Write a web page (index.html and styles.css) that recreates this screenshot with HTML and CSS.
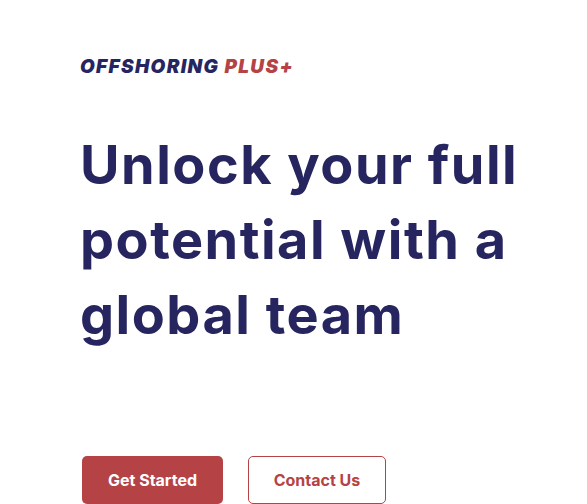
FILE: index.html
```html
<!DOCTYPE html>
<html lang="en">
<head>
<meta charset="utf-8">
<title>Offshoring Plus+</title>
<link rel="stylesheet" href="styles.css">
</head>
<body>
<main class="hero">
  <div class="logo"><span class="logo-main">OFFSHORING</span> <span class="logo-plus">PLUS+</span></div>
  <h1 class="headline">Unlock your full potential with a global team</h1>
  <div class="actions">
    <a class="btn btn-primary" href="#">Get Started</a>
    <a class="btn btn-outline" href="#">Contact Us</a>
  </div>
</main>
</body>
</html>
```
FILE: styles.css
```css
html, body {
  margin: 0;
  padding: 0;
  background: #ffffff;
}
body {
  font-family: "Inter", "Liberation Sans", sans-serif;
  overflow: hidden;
  height: 504px;
}
.hero {
  padding: 56px 20px 0 80px;
  display: flex;
  flex-direction: column;
}
.logo {
  font-size: 19px;
  line-height: 22px;
  font-weight: 900;
  font-style: italic;
  letter-spacing: 1.35px;
  color: #27255f;
}
.logo-plus {
  color: #b54346;
}
.headline {
  margin: 49px 0 0 0;
  font-size: 54px;
  line-height: 75px;
  font-weight: 700;
  color: #27255f;
  max-width: 480px;
  letter-spacing: 1.5px;
}
.actions {
  margin-top: 104px;
  display: flex;
  gap: 25px;
}
.btn {
  display: inline-flex;
  align-items: center;
  justify-content: center;
  box-sizing: border-box;
  height: 48px;
  font-size: 16px;
  font-weight: 700;
  text-decoration: none;
  border-radius: 5px;
}
.btn-primary {
  width: 141px;
  background: #b54346;
  color: #ffffff;
  margin-left: 2px;
}
.btn-outline {
  width: 138px;
  background: #ffffff;
  color: #b54346;
  border: 1px solid #b54346;
}
```
